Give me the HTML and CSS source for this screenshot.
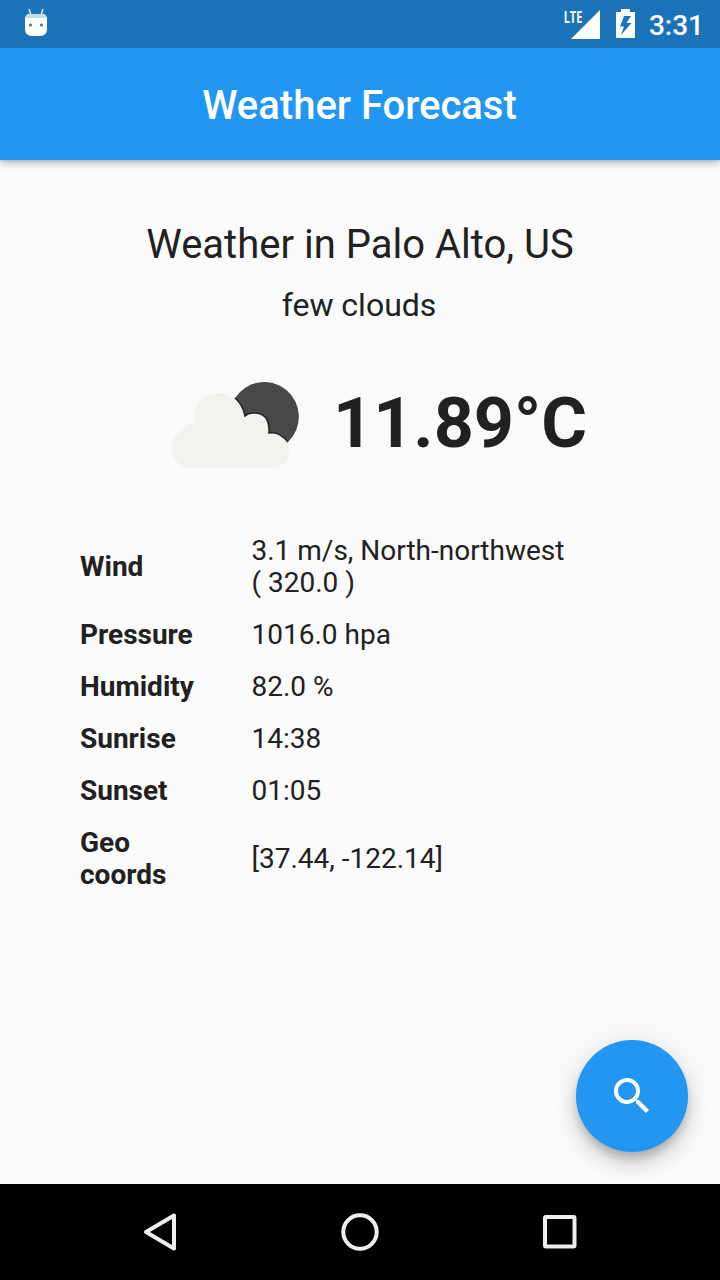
FILE: index.html
```
<!DOCTYPE html>
<html lang="en">
<head>
<meta charset="utf-8">
<title>Weather Forecast</title>
<link rel="stylesheet" href="styles.css">
</head>
<body>
<div class="screen">
  <div class="status-bar">
    <svg class="android-icon" width="26" height="28" viewBox="0 0 26 28">
      <path d="M6 0l2 6M20 0l-2 6" stroke="#e4eef6" stroke-width="1.500"/>
      <path d="M2 10Q2 5 7 5H19Q24 5 24 10V20Q24 27 17 27H9Q2 27 2 20Z" fill="#fff"/>
      <path d="M2.500 9Q3.500 5 7 5H19Q22.500 5 23.500 9Z" fill="#c5dced"/>
      <circle cx="7.500" cy="16" r="1.600" fill="#397fa6"/><circle cx="18.500" cy="16" r="1.600" fill="#397fa6"/>
    </svg>
    <div class="status-right">
      <span class="lte">LTE</span>
      <svg class="signal" width="29" height="29" viewBox="0 0 29 29"><path d="M29 0V29H0Z" fill="#fff"/></svg>
      <svg class="battery" width="19" height="29" viewBox="0 0 19 29">
        <path fill="#fff" fill-rule="evenodd" d="M5 0H14V3H19V29H0V3H5ZM8 7L4 17.500H8L5 26L15.500 14H10.500L15 7Z"/>
      </svg>
      <span class="clock">3:31</span>
    </div>
  </div>
  <header class="app-bar"><h1 class="app-title">Weather Forecast</h1></header>
  <main class="content">
    <h2 class="place">Weather in Palo Alto, US</h2>
    <p class="summary">few clouds</p>
    <div class="current">
      <svg class="cloud" width="132" height="90" viewBox="0 0 132 90">
        <path fill="#f2f2ee" d="M20 88A20 20 0 0 1 14 50A14 14 0 0 1 26 43C19 17 56 -2 72 29L79 36Q88 30 96 37Q103 44 102 54Q118 54 120 69Q121 85 105 88Z"/>
        <path fill="#48484a" d="M66 18A34.700 34.700 0 1 1 119 62Q110 51 100 53Q101 32 84 33Q79 33 76 36Q74 25 66 18Z"/>
        <path fill="none" stroke="#202020" stroke-width="1.500" d="M66 18Q74 25 76 36Q79 33 84 33Q101 32 100 53Q110 51 119 62"/>
      </svg>
      <span class="temp">11.89°C</span>
    </div>
    <dl class="details">
      <dt class="label">Wind</dt><dd class="value">3.1 m/s, North-northwest<br>( 320.0 )</dd>
      <dt class="label">Pressure</dt><dd class="value">1016.0 hpa</dd>
      <dt class="label">Humidity</dt><dd class="value">82.0 %</dd>
      <dt class="label">Sunrise</dt><dd class="value">14:38</dd>
      <dt class="label">Sunset</dt><dd class="value">01:05</dd>
      <dt class="label">Geo<br>coords</dt><dd class="value">[37.44, -122.14]</dd>
    </dl>
    <button class="fab" aria-label="Search">
      <svg width="48" height="48" viewBox="0 0 24 24"><path fill="#fff" d="M15.500 14h-.79l-.28-.27A6.471 6.471 0 0 0 16 9.500 6.500 6.500 0 1 0 9.500 16c1.610 0 3.090-.59 4.230-1.570l.27.28v.79l5 4.990L20.490 19l-4.990-5zm-6 0C7.010 14 5 11.990 5 9.500S7.010 5 9.500 5 14 7.010 14 9.500 11.990 14 9.500 14z"/></svg>
    </button>
  </main>
  <nav class="nav-bar">
    <svg width="40" height="40" viewBox="0 0 40 40"><path d="M34 3.500V36.500L6 20Z"/></svg>
    <svg width="40" height="40" viewBox="0 0 40 40"><circle cx="20" cy="20" r="16.700"/></svg>
    <svg width="40" height="40" viewBox="0 0 40 40"><rect x="5" y="5" width="29.500" height="29.500" rx="1"/></svg>
  </nav>
</div>
</body>
</html>
```
FILE: styles.css
```
body { margin: 0; font-family: Roboto, "Liberation Sans", sans-serif; }
.screen { width: 720px; height: 1280px; display: flex; flex-direction: column; background: #fafafa; color: #212121; overflow: hidden; }
.status-bar { height: 48px; flex: none; display: flex; justify-content: space-between; background: #1a73b9; color: #fff; z-index: 2; }
.android-icon { margin: 9px 0 0 23px; fill: none; }
.status-right { display: flex; padding-right: 16px; }
.lte { font: 700 16px/16px "Open Sans", sans-serif; transform: scaleX(.68); transform-origin: right; margin: 9px -11px 0 0; }
.signal { margin-top: 10px; }
.battery { margin: 9px 14px 0 16px; }
.clock { font-size: 28px; font-weight: 500; line-height: 51px; }
.app-bar { height: 112px; flex: none; display: flex; align-items: center; justify-content: center; background: #2196f3; box-shadow: 0 2px 8px rgba(0,0,0,.35); z-index: 1; }
.app-title { margin: 4px 1px 0 0; color: #fff; font-size: 40px; font-weight: 500; line-height: 48px; }
.content { flex: 1; display: flex; flex-direction: column; align-items: center; position: relative; padding-top: 61px; }
.place { margin: 0; font-size: 40px; font-weight: 400; line-height: 48px; }
.summary { margin: 17px 2px 0 0; font-size: 32px; line-height: 38px; }
.current { display: flex; align-items: center; align-self: flex-start; margin: 56px 0 0 169px; height: 90px; }
.temp { margin: -4px 0 0 32px; font-size: 70px; font-weight: 700; line-height: 84px; }
.details { display: grid; grid-template-columns: 171.5px 1fr; align-items: center; align-self: stretch; margin: 55px 80px 0; font-size: 28px; line-height: 32px; }
.label { font-weight: 700; padding: 10px 0; }
.value { margin: 0; padding: 10px 0; }
.fab { position: absolute; right: 32px; bottom: 32px; width: 112px; height: 112px; padding: 0; border: 0; border-radius: 50%; background: #2196f3; display: flex; align-items: center; justify-content: center; box-shadow: 0 7px 10px -2px rgba(0,0,0,.2), 0 12px 20px rgba(0,0,0,.14), 0 2px 36px rgba(0,0,0,.08); }
.nav-bar { height: 96px; flex: none; display: flex; align-items: center; justify-content: center; gap: 160px; background: #000; z-index: 1; }
.nav-bar svg { fill: none; stroke: #eeeeea; stroke-width: 4; stroke-linejoin: round; }
```
